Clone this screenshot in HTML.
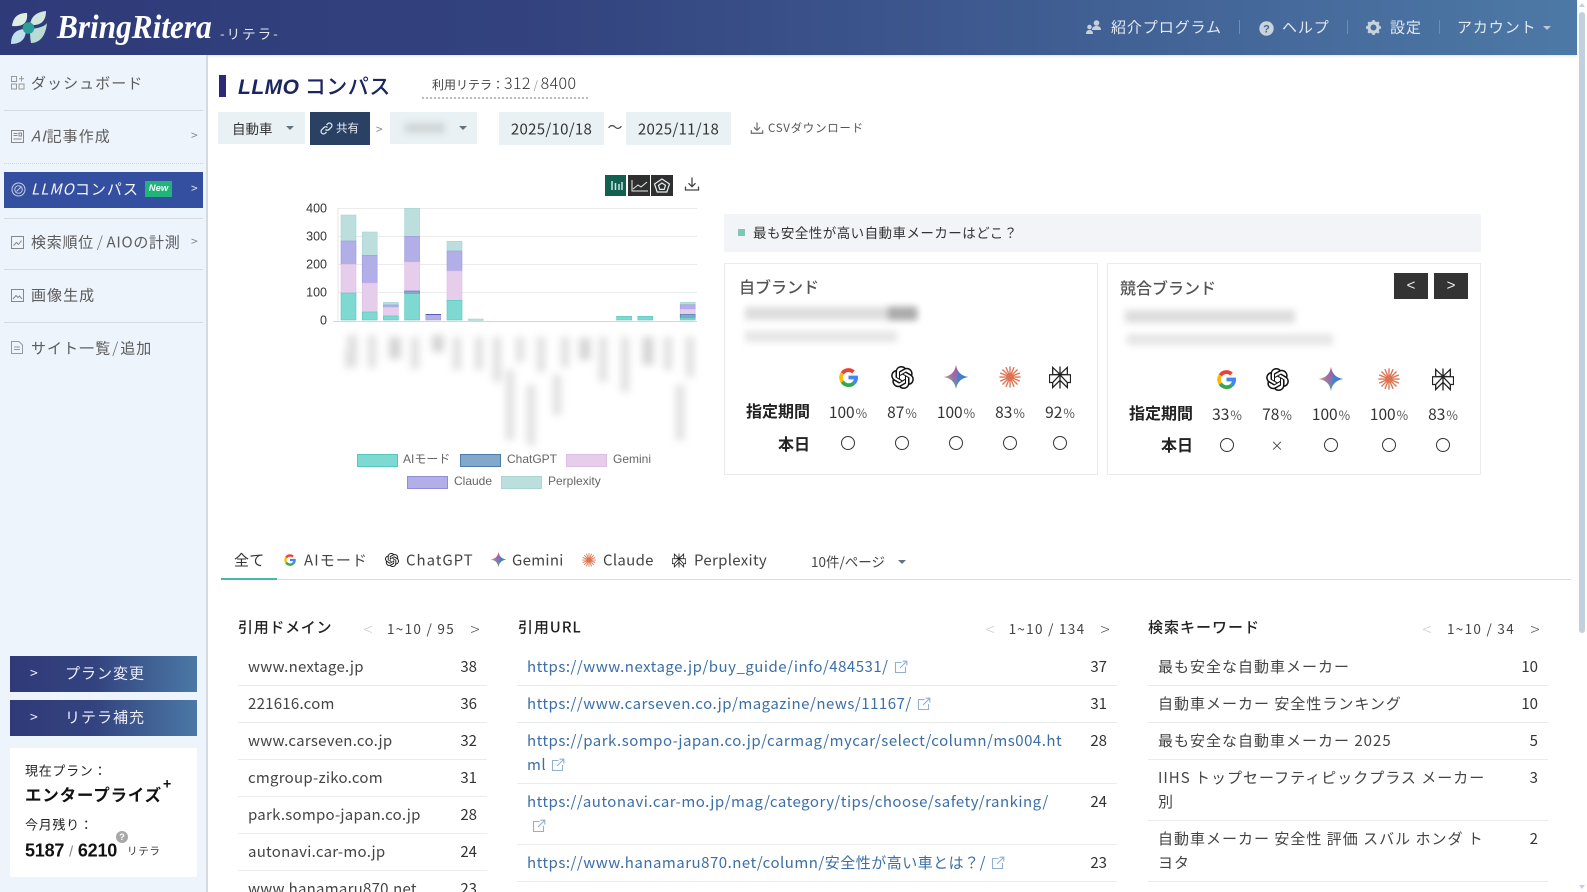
<!DOCTYPE html>
<html lang="ja"><head><meta charset="utf-8"><title>LLMOコンパス</title>
<style>
*{box-sizing:border-box}
html,body{margin:0;padding:0;width:1587px;height:892px;overflow:hidden;background:#fff}
body{position:relative;font-family:"Noto Sans CJK JP","Liberation Sans",sans-serif;color:#333;font-size:15px}
.a{position:absolute;white-space:nowrap}
.c{transform:translate(-50%,-50%)}
.v{transform:translateY(-50%)}
.r{transform:translate(-100%,-50%)}
#hd{left:0;top:0;width:1577px;height:55px;background:linear-gradient(90deg,#2f3a79 0%,#33437f 35%,#4d79a6 100%);box-shadow:0 1px 3px rgba(0,0,0,.12)}
.nav{color:#e3e9f0;font-size:15px;letter-spacing:.9px}
.sep{width:1px;height:14px;top:20px;background:#6d8fb3}
#sb{left:0;top:55px;width:208px;height:837px;background:#edf4fb;border-right:2px solid #d3dae2}
.mi{color:#5c5c5c;font-size:15px;letter-spacing:1.05px;font-weight:400}
.hr{left:4px;width:199px;height:1px;background:#d3dbe4}
.btn{left:10px;width:187px;height:36px;background:linear-gradient(90deg,#303a78 0%,#33437f 45%,#4b78a5 100%);color:#eef;font-size:15px;letter-spacing:1px}
.sel{background:#e9f1f5;height:32px;top:112px}
.car{width:0;height:0;border-left:4px solid transparent;border-right:4px solid transparent;border-top:4px solid #5f7380}
.card{background:#fff;border:1px solid #e9ebee}
.bold{font-weight:700;font-size:16px;color:#222}
.pc{font-size:15.5px;color:#333;font-weight:400}
.pc small{font-size:12.5px;color:#555;margin-left:1px}
.o{width:14px;height:14px;border:1px solid #333;border-radius:50%}
.tab{font-size:15px;color:#444;letter-spacing:.3px;font-weight:400}
.st{font-size:15px;font-weight:500;color:#222}
.pg{font-size:13.5px;color:#444;font-weight:400;letter-spacing:1.3px}
.lt{color:#ccc;font-size:17px;font-weight:300}
.gt{color:#555;font-size:17px;font-weight:300}
.col{top:649px}
.row{display:flex;justify-content:space-between;padding:6px 10px;line-height:24px;border-bottom:1px solid #e9ebed;font-size:15px;color:#444;font-weight:400;white-space:nowrap}
.row b{font-weight:400;color:#333;letter-spacing:0}
.d .row{letter-spacing:.25px}
.u .row{letter-spacing:.49px}
.k .row{letter-spacing:1px}
.u span{color:#3c6fa6}
.u svg{vertical-align:-2px;margin-left:5px}
.bl{background:#aaa;filter:blur(3.5px);opacity:.4}
.bd{background:#777;filter:blur(3.5px);opacity:.5}
</style></head><body>
<svg width="0" height="0" style="position:absolute"><defs>
<linearGradient id="gm" x1="0" y1="0" x2="0" y2="1"><stop offset="0" stop-color="#e0457b"/><stop offset=".5" stop-color="#9a6ab0"/><stop offset="1" stop-color="#45b27a"/></linearGradient>
<linearGradient id="gm2" x1="0" y1="0" x2="1" y2="0"><stop offset="0" stop-color="#e6b53a" stop-opacity=".9"/><stop offset=".45" stop-color="#8a7ab8" stop-opacity=".1"/><stop offset=".6" stop-color="#2a86d8" stop-opacity=".7"/><stop offset="1" stop-color="#2a86d8"/></linearGradient>
<symbol id="ig" viewBox="0 0 24 24"><path d="M5.600 7.600A7.800 7.800 0 0 1 12 4.200a7.800 7.800 0 0 1 5.200 2" fill="none" stroke="#ea4335" stroke-width="4"/><path d="M5.600 7.600a8 8 0 0 0 0 8.800" fill="none" stroke="#fbbc05" stroke-width="4"/><path d="M5.600 16.400A7.800 7.800 0 0 0 17.400 18" fill="none" stroke="#34a853" stroke-width="4"/><path d="M17.400 18a7.800 7.800 0 0 0 2.500-6H12" fill="none" stroke="#4285f4" stroke-width="4"/></symbol>
<symbol id="ic" viewBox="0 0 24 24"><path fill="#111" d="M22.2819 9.8211a5.9847 5.9847 0 0 0-.5157-4.9108 6.0462 6.0462 0 0 0-6.5098-2.9A6.0651 6.0651 0 0 0 4.9807 4.1818a5.9847 5.9847 0 0 0-3.9977 2.9 6.0462 6.0462 0 0 0 .7427 7.0966 5.98 5.98 0 0 0 .511 4.9107 6.051 6.051 0 0 0 6.5146 2.9001A5.9847 5.9847 0 0 0 13.2599 24a6.0557 6.0557 0 0 0 5.7718-4.2058 5.9894 5.9894 0 0 0 3.9977-2.9001 6.0557 6.0557 0 0 0-.7475-7.0729zm-9.022 12.6081a4.4755 4.4755 0 0 1-2.8764-1.0408l.1419-.0804 4.7783-2.7582a.7948.7948 0 0 0 .3927-.6813v-6.7369l2.02 1.1686a.071.071 0 0 1 .038.052v5.5826a4.504 4.504 0 0 1-4.4945 4.4944zm-9.6607-4.1254a4.4708 4.4708 0 0 1-.5346-3.0137l.142.0852 4.783 2.7582a.7712.7712 0 0 0 .7806 0l5.8428-3.3685v2.3324a.0804.0804 0 0 1-.0332.0615L9.74 19.9502a4.4992 4.4992 0 0 1-6.1408-1.6464zM2.3408 7.8956a4.485 4.485 0 0 1 2.3655-1.9728V11.6a.7664.7664 0 0 0 .3879.6765l5.8144 3.3543-2.0201 1.1685a.0757.0757 0 0 1-.071 0l-4.8303-2.7865A4.504 4.504 0 0 1 2.3408 7.872zm16.5963 3.8558L13.1038 8.364 15.1192 7.2a.0757.0757 0 0 1 .071 0l4.8303 2.7913a4.4944 4.4944 0 0 1-.6765 8.1042v-5.6772a.79.79 0 0 0-.407-.667zm2.0107-3.0231l-.142-.0852-4.7735-2.7818a.7759.7759 0 0 0-.7854 0L9.409 9.2297V6.8974a.0662.0662 0 0 1 .0284-.0615l4.8303-2.7866a4.4992 4.4992 0 0 1 6.6802 4.66zM8.3065 12.863l-2.02-1.1638a.0804.0804 0 0 1-.038-.0567V6.0742a4.4992 4.4992 0 0 1 7.3757-3.4537l-.142.0805L8.704 5.459a.7948.7948 0 0 0-.3927.6813zm1.0976-2.3654l2.602-1.4998 2.6069 1.4998v2.9994l-2.5974 1.4997-2.6067-1.4997Z"/></symbol>
<symbol id="im" viewBox="0 0 24 24"><path fill="url(#gm)" d="M12 0c1.200 6.800 4.600 10.600 12 12-7.400 1.400-10.800 5.200-12 12-1.200-6.800-4.600-10.600-12-12C7.400 10.600 10.800 6.800 12 0z"/><path fill="url(#gm2)" d="M12 0c1.200 6.800 4.600 10.600 12 12-7.400 1.400-10.800 5.200-12 12-1.200-6.800-4.600-10.600-12-12C7.400 10.600 10.800 6.800 12 0z"/></symbol>
<symbol id="il" viewBox="0 0 24 24"><g stroke="#dd7350" stroke-width="1.500" stroke-linecap="round"><path d="M12 1v22M1 12h22M4.200 4.200l15.600 15.600M19.800 4.200L4.200 19.800M7.800 1.800l8.400 20.400M16.200 1.800L7.800 22.200M1.800 7.800l20.400 8.400M22.200 7.800L1.800 16.200"/></g><circle cx="12" cy="12" r="2.600" fill="#dd7350"/></symbol>
<symbol id="ip" viewBox="0 0 24 24"><path fill="none" stroke="#222" stroke-width="1.400" d="M12 0v24M4 1l8 7.500L20 1v8h3.500v8.500H20V23l-8-8-8 8v-5.500H.5V9H4zM4 9h16M4 9l8-.5M20 9l-8-.5M4 17.500L12 9l8 8.500"/></symbol>
<symbol id="ix" viewBox="0 0 14 14"><path fill="none" stroke="#8fb0cf" stroke-width="1.100" d="M7.500 2.500H1.500v10h10V7M6 8l6.500-6.500M8.500 1.200h4.300v4.300"/></symbol>
<symbol id="dl" viewBox="0 0 16 16"><path fill="none" stroke="currentColor" stroke-width="1.300" d="M8 1.500v9M4.500 7.200L8 10.700l3.500-3.500M1.500 10.500v3.500h13v-3.500"/></symbol>
</defs></svg>

<div class="a" id="hd"></div>
<svg class="a" style="left:10px;top:10px" width="38" height="36" viewBox="0 0 38 36">
<path d="M2 16C3 8 7 3 17 3c1 9-3 14-15 13z" fill="#dfeee3"/><path d="M20 15C21 6 27 2 36 1c0 9-4 15-16 14z" fill="#d2e6de"/>
<path d="M1 34c0-10 5-15 15-15 0 9-4 15-15 15z" fill="#c0e0ec"/><path d="M20 19c10-1 15-3 17-6-1 11-6 20-16 20-1-5-1-10-1-14z" fill="#b9dbd5"/>
<circle cx="18.500" cy="18" r="5.800" fill="#2a9f97"/></svg>
<div class="a" style="left:57px;top:11px;color:#fff;font:italic 700 34px/34px 'Liberation Serif',serif;transform-origin:0 0;transform:scaleX(.92)">BringRitera</div>
<div class="a v" style="left:220px;top:33px;color:#e3e9f0;font-size:13.500px;letter-spacing:2px">-リテラ-</div>

<svg class="a" style="left:1085px;top:20px" width="17" height="15" viewBox="0 0 17 15" fill="#c5d0dc"><circle cx="11.500" cy="3" r="2.800"/><path d="M7 10c0-3 2-4 4.500-4S16 7 16 10z"/><circle cx="4.500" cy="7" r="2.300"/><path d="M1 14c0-3 1.500-4 3.500-4S8 11 8 14z"/></svg>
<div class="a v nav" style="left:1111px;top:27px">紹介プログラム</div><div class="a sep" style="left:1239px"></div>
<svg class="a" style="left:1259px;top:21px" width="15" height="15" viewBox="0 0 15 15"><circle cx="7.500" cy="7.500" r="7.200" fill="#c9d3de"/><text x="7.500" y="11.500" text-anchor="middle" font-size="11" font-weight="700" fill="#42688f" font-family="Liberation Sans">?</text></svg>
<div class="a v nav" style="left:1282px;top:27px">ヘルプ</div><div class="a sep" style="left:1347px"></div>
<svg class="a" style="left:1366px;top:20px" width="15" height="15" viewBox="0 0 15 15"><circle cx="7.500" cy="7.500" r="4.600" fill="none" stroke="#c9d3de" stroke-width="3.200"/><g stroke="#c9d3de" stroke-width="2.400"><path d="M7.500 0v3M7.500 12v3M0 7.500h3M12 7.500h3M2.200 2.200l2 2M10.800 10.800l2 2M12.800 2.200l-2 2M4.200 10.800l-2 2"/></g></svg>
<div class="a v nav" style="left:1390px;top:27px">設定</div><div class="a sep" style="left:1439px"></div>
<div class="a v nav" style="left:1457px;top:27px">アカウント</div>
<div class="a car" style="left:1543px;top:26px;border-top-color:#b9c8d8"></div>

<!-- scrollbar -->
<div class="a" style="left:1579px;top:12px;width:6px;height:621px;background:#c2cfdc;border-radius:3px"></div>
<div class="a car" style="left:1579px;top:3px;border-top:0;border-bottom:4px solid #c2cfdc;border-left-width:3px;border-right-width:3px"></div>
<div class="a car" style="left:1579px;top:885px;border-top-color:#c2cfdc;border-left-width:3px;border-right-width:3px"></div>

<!-- sidebar -->
<div class="a" id="sb"></div>
<svg class="a" style="left:11px;top:75px" width="14" height="15" viewBox="0 0 14 15" fill="none" stroke="#999"><path d="M.5 1.500h5v5h-5zM.5 9h5v5h-5zM8 9h5v5H8zM10.500 1v5.500M8 3.700h5"/></svg>
<div class="a v mi" style="left:31px;top:83px">ダッシュボード</div><div class="a hr" style="top:110px"></div>
<svg class="a" style="left:11px;top:130px" width="13" height="13" viewBox="0 0 13 13" fill="none" stroke="#888"><path d="M.5.500h12v12H.5zM2.500 3.500h4M2.500 5.500h4M8 3h2.500v3H8zM2.500 9h8"/></svg>
<div class="a v mi" style="left:31px;top:136px"><i>AI</i>記事作成</div><div class="a v" style="left:191px;top:135px;color:#888;font-size:12px">&gt;</div>
<div class="a hr" style="top:163px;background:none;border-top:1px dotted #ccd4dd"></div>
<div class="a" style="left:4px;top:172px;width:199px;height:36px;background:#354fa0"></div>
<svg class="a" style="left:11px;top:182px" width="15" height="15" viewBox="0 0 15 15" fill="none" stroke="#c4cfe8"><circle cx="7.500" cy="7.500" r="6.500"/><circle cx="7.500" cy="7.500" r="3.800"/><path d="M5.500 9.500L10 5"/></svg>
<div class="a v mi" style="left:31px;top:189px;color:#f5f7fc"><i>LLMO</i>コンパス</div>
<div class="a" style="left:145px;top:181px;width:27px;height:16px;background:#20b47a;color:#e9fff4;font:italic 700 9.500px/16px 'Liberation Sans',sans-serif;text-align:center">New</div>
<div class="a v" style="left:191px;top:188px;color:#dfe6f5;font-size:12px">&gt;</div>
<div class="a hr" style="top:218px"></div>
<svg class="a" style="left:11px;top:236px" width="13" height="13" viewBox="0 0 13 13" fill="none" stroke="#888"><path d="M.5.500h12v12H.5zM2.500 9.500l3-3 2 2 3-4"/></svg>
<div class="a v mi" style="left:31px;top:242px;letter-spacing:.72px">検索順位<span style="font-weight:300;margin:0 3px">/</span>AIOの計測</div><div class="a v" style="left:191px;top:241px;color:#888;font-size:12px">&gt;</div>
<div class="a hr" style="top:269px"></div>
<svg class="a" style="left:11px;top:289px" width="13" height="13" viewBox="0 0 13 13" fill="none" stroke="#888"><path d="M.5.500h12v12H.5zM2 10l3-3.500 2 2 1.500-1.500 2.500 3"/></svg>
<div class="a v mi" style="left:31px;top:295px">画像生成</div><div class="a hr" style="top:322px"></div>
<svg class="a" style="left:11px;top:341px" width="12" height="13" viewBox="0 0 12 13" fill="none" stroke="#999"><path d="M.5.500h7.500l3.500 3.500v8.500H.5zM3 6h6M3 8.500h6"/></svg>
<div class="a v mi" style="left:31px;top:348px">サイト一覧<span style="font-weight:300;margin:0 1px">/</span>追加</div>

<div class="a btn" style="top:656px"></div><div class="a v" style="left:30px;top:673px;color:#eef;font-size:14px">&gt;</div><div class="a v" style="left:65px;top:673px;color:#eef;letter-spacing:1px;font-size:15px">プラン変更</div>
<div class="a btn" style="top:700px"></div><div class="a v" style="left:30px;top:717px;color:#eef;font-size:14px">&gt;</div><div class="a v" style="left:65px;top:717px;color:#eef;letter-spacing:1px;font-size:15px">リテラ補充</div>
<div class="a" style="left:10px;top:748px;width:187px;height:129px;background:#fff"></div>
<div class="a v" style="left:25px;top:770px;font-size:13px;color:#222;letter-spacing:.7px;font-weight:400">現在プラン：</div>
<div class="a v" style="left:25px;top:794px;font-size:16.500px;font-weight:700;color:#111;letter-spacing:.8px">エンタープライズ</div>
<div class="a v" style="left:163px;top:784px;font-size:14px;font-weight:700;color:#111">+</div>
<div class="a v" style="left:25px;top:824px;font-size:13px;color:#222;letter-spacing:.7px;font-weight:400">今月残り：</div>
<div class="a v" style="left:25px;top:851px;font:700 18px 'Liberation Sans',sans-serif;color:#111;letter-spacing:-.2px">5187 <span style="font-weight:400;color:#888;font-size:15px">/</span> 6210</div>
<div class="a" style="left:116px;top:831px;width:12px;height:12px;border-radius:50%;background:#a8a8a8;color:#fff;font:700 9px/12px 'Liberation Sans';text-align:center">?</div>
<div class="a v" style="left:127px;top:851px;font-size:10.500px;color:#333;letter-spacing:.7px">リテラ</div>

<!-- title -->
<div class="a" style="left:219px;top:75px;width:7px;height:22px;background:#2a2b74"></div>
<div class="a v" style="left:238px;top:86px;font-size:21px;font-weight:500;color:#1b2660;letter-spacing:.5px"><i style="font-family:'Liberation Sans'; font-weight:700">LLMO</i> コンパス</div>
<div class="a v" style="left:432px;top:81.500px;font-size:12px;color:#444;letter-spacing:0;font-weight:400">利用リテラ：<span style="font-size:16px;color:#333;letter-spacing:.4px;font-weight:300">312</span> <span style="color:#999;font-size:11px">/</span> <span style="font-size:16px;color:#333;letter-spacing:.4px;font-weight:300">8400</span></div>
<div class="a" style="left:422px;top:97px;width:166px;border-top:2px dotted #bbb"></div>

<div class="a sel" style="left:218px;width:87px"></div><div class="a v" style="left:232px;top:128px;font-size:13.500px;color:#333">自動車</div><div class="a car" style="left:286px;top:126px"></div>
<div class="a" style="left:310px;top:112px;width:60px;height:33px;background:#2a4163"></div>
<svg class="a" style="left:320px;top:122px" width="13" height="13" viewBox="0 0 13 13" fill="none" stroke="#dfe6ee" stroke-width="1.300"><path d="M5.500 7.500a2.400 2.400 0 0 0 3.500 0l2.200-2.200a2.400 2.400 0 0 0-3.500-3.500L6.500 3M7.500 5.500a2.400 2.400 0 0 0-3.500 0L1.800 7.700a2.400 2.400 0 0 0 3.500 3.500L6.500 10"/></svg>
<div class="a v" style="left:336px;top:128px;font-size:11.500px;color:#e6ebf2">共有</div>
<div class="a v" style="left:376px;top:129px;font-size:12px;color:#888">&gt;</div>
<div class="a sel" style="left:390px;width:87px"></div><div class="a bl" style="left:405px;top:123px;width:40px;height:10px"></div><div class="a car" style="left:459px;top:126px"></div>
<div class="a sel" style="left:499px;width:105px;height:33px"></div><div class="a c" style="left:551.500px;top:129px;font-size:15px;color:#333;font-weight:400;letter-spacing:.3px">2025/10/18</div>
<div class="a c" style="left:615px;top:127px;font-size:15px;color:#444">〜</div>
<div class="a sel" style="left:626px;width:105px;height:33px"></div><div class="a c" style="left:678.500px;top:129px;font-size:15px;color:#333;font-weight:400;letter-spacing:.3px">2025/11/18</div>
<svg class="a" style="left:750px;top:121px;color:#666" width="14" height="14"><use href="#dl"/></svg>
<div class="a v" style="left:768px;top:128px;font-size:11.500px;color:#555;font-weight:400;letter-spacing:.7px">CSVダウンロード</div>

<!-- chart toolbar -->
<div class="a" style="left:605px;top:175px;width:21px;height:21px;background:#116150"></div>
<div class="a" style="left:628px;top:175px;width:22px;height:21px;background:#2f2f2f"></div>
<div class="a" style="left:651px;top:175px;width:22px;height:21px;background:#2f2f2f"></div>
<svg class="a" style="left:605px;top:175px" width="68" height="21" fill="none" stroke="#e6eeee"><path stroke-width="1.500" d="M7 6v9M10.500 8v7M14 9v6M17 7v8" stroke="#cfe6df"/><path d="M27 5v11h16M28 14l5-4 3 2 6-5"/><path d="M57 4l7.500 5-2.700 8h-9.600l-2.700-8z M57 8l3.500 2.400-1.300 4h-4.400l-1.300-4z" stroke-width="1.200"/></svg>
<svg class="a" style="left:684px;top:176px;color:#444" width="16" height="16"><use href="#dl"/></svg>

<!-- chart -->
<svg class="a" style="left:0;top:0" width="1587" height="892">
<defs><filter id="f" x="-10%" y="-10%" width="120%" height="120%"><feGaussianBlur stdDeviation="4"/></filter></defs>
<g stroke="#ebebeb"><path d="M338 208.500H697M338 236.500H697M338 264.500H697M338 292.500H697"/></g><path d="M338 208v113" stroke="#e6e6e6"/><path d="M333 321.500H697" stroke="#d5d5d5"/>
<g font-family="Liberation Sans" font-size="12.500" fill="#333" text-anchor="end"><text x="327" y="212.500">400</text><text x="327" y="240.500">300</text><text x="327" y="268.500">200</text><text x="327" y="296.500">100</text><text x="327" y="324.500">0</text></g>
<g fill="#bcdfdd" stroke="#a9d5d2" stroke-width=".6"><rect x="341" y="215" width="15" height="26"/><rect x="362.200" y="232" width="15" height="23.300"/><rect x="383.400" y="302.300" width="15" height="2.700"/><rect x="404.600" y="208.300" width="15" height="28"/><rect x="447" y="241.300" width="15" height="9.700"/><rect x="468.200" y="319" width="15" height="1.500"/><rect x="680.200" y="302.300" width="15" height="2.400"/></g>
<g fill="#b2aee8" stroke="#a09bdf" stroke-width=".6"><rect x="341" y="241" width="15" height="23.300"/><rect x="362.200" y="255.300" width="15" height="27.700"/><rect x="383.400" y="305" width="15" height="2.300"/><rect x="404.600" y="236.300" width="15" height="25.700"/><rect x="425.800" y="314.300" width="15" height="5.700"/><rect x="447" y="251" width="15" height="20"/><rect x="680.200" y="304.700" width="15" height="4.600"/></g>
<g fill="#e6cdec" stroke="#ddbfe6" stroke-width=".6"><rect x="341" y="264.300" width="15" height="28.700"/><rect x="362.200" y="283" width="15" height="29"/><rect x="383.400" y="307.300" width="15" height="8.700"/><rect x="404.600" y="262" width="15" height="29"/><rect x="447" y="271" width="15" height="29.300"/><rect x="680.200" y="309.300" width="15" height="5"/></g>
<g fill="#82a9cc" stroke="#4d7cab" stroke-width=".6"><rect x="404.600" y="291" width="15" height="2.700"/><rect x="680.200" y="314.300" width="15" height="3.700"/></g>
<path d="M425.800 314.500h15" stroke="#5a57b0" stroke-width="1"/>
<g fill="#7dd9d2" stroke="#55c8be" stroke-width=".6"><rect x="341" y="293" width="15" height="27"/><rect x="362.200" y="312" width="15" height="8"/><rect x="383.400" y="316" width="15" height="4"/><rect x="404.600" y="293.700" width="15" height="26.300"/><rect x="447" y="300.300" width="15" height="19.700"/><rect x="616.600" y="316.300" width="15" height="3.700"/><rect x="637.800" y="316.300" width="15" height="3.700"/><rect x="680.200" y="318" width="15" height="2"/></g>
<g filter="url(#f)" stroke="#8a8a8a" stroke-width="8" opacity=".28" fill="none">
<path d="M352 335v30M350 350v18" stroke-width="10"/><path d="M372 335v33"/><path d="M395 337v22" stroke-width="12" stroke="#666"/><path d="M415 337v32"/><path d="M438 335v17" stroke-width="12" stroke="#666"/><path d="M457 337v33"/><path d="M479 337v33"/><path d="M497 337v45"/><path d="M520 337v25M510 370v70"/><path d="M541 337v35M531 385v60"/><path d="M565 337v30M557 375v40"/><path d="M585 338v22" stroke-width="11" stroke="#666"/><path d="M603 337v45"/><path d="M625 337v55"/><path d="M648 337v28" stroke-width="11" stroke="#666"/><path d="M668 337v33"/><path d="M690 337v40M680 385v55"/>
</g>
<g stroke-width="1"><rect x="357.500" y="454.500" width="40" height="12" fill="#7dd9d2" stroke="#55c8be"/><rect x="460.500" y="454.500" width="40" height="12" fill="#82a9cc" stroke="#4d7cab"/><rect x="566.500" y="454.500" width="40" height="12" fill="#e6cdec" stroke="#ddbfe6"/><rect x="407.500" y="476.500" width="40" height="12" fill="#b2aee8" stroke="#918cd9"/><rect x="501.500" y="476.500" width="40" height="12" fill="#bcdfdd" stroke="#a9d5d2"/></g>
<g font-family="Liberation Sans, Noto Sans CJK JP" font-size="12" fill="#666"><text x="403" y="463">AIモード</text><text x="507" y="463">ChatGPT</text><text x="613" y="463">Gemini</text><text x="454" y="485">Claude</text><text x="548" y="485">Perplexity</text></g>
</svg>

<!-- question -->
<div class="a" style="left:724px;top:214px;width:757px;height:38px;background:#f3f4f8"></div>
<div class="a" style="left:738px;top:229px;width:7px;height:7px;background:#7fc7b4"></div>
<div class="a v" style="left:753px;top:232px;font-size:13.500px;color:#333;letter-spacing:.45px;font-weight:400">最も安全性が高い自動車メーカーはどこ？</div>

<!-- cards -->
<div class="a card" style="left:724px;top:263px;width:374px;height:212px"></div>
<div class="a card" style="left:1107px;top:263px;width:374px;height:212px"></div>
<div class="a v" style="left:739px;top:286px;font-size:16px;font-weight:500;color:#555">自ブランド</div>
<div class="a bl" style="left:745px;top:307px;width:172px;height:13px"></div><div class="a bd" style="left:888px;top:307px;width:29px;height:13px"></div><div class="a bl" style="left:745px;top:331px;width:152px;height:11px;opacity:.3"></div>
<svg class="a" style="left:837px;top:366px" width="23" height="23"><use href="#ig"/></svg><svg class="a" style="left:891px;top:366px" width="23" height="23"><use href="#ic"/></svg><svg class="a" style="left:944px;top:365px" width="24" height="24"><use href="#im"/></svg><svg class="a" style="left:999px;top:366px" width="22" height="22"><use href="#il"/></svg><svg class="a" style="left:1049px;top:366px" width="22" height="23"><use href="#ip"/></svg>
<div class="a bold r" style="left:810px;top:410px">指定期間</div>
<div class="a pc c" style="left:848px;top:412px">100<small>%</small></div><div class="a pc c" style="left:902px;top:412px">87<small>%</small></div><div class="a pc c" style="left:956px;top:412px">100<small>%</small></div><div class="a pc c" style="left:1010px;top:412px">83<small>%</small></div><div class="a pc c" style="left:1060px;top:412px">92<small>%</small></div>
<div class="a bold r" style="left:810px;top:443px">本日</div>
<div class="a o" style="left:841px;top:436px"></div><div class="a o" style="left:895px;top:436px"></div><div class="a o" style="left:949px;top:436px"></div><div class="a o" style="left:1003px;top:436px"></div><div class="a o" style="left:1053px;top:436px"></div>

<div class="a v" style="left:1120px;top:287px;font-size:16px;font-weight:500;color:#555">競合ブランド</div>
<div class="a" style="left:1394px;top:273px;width:34px;height:26px;background:#333;color:#eee;text-align:center;font:15px/25px 'Liberation Sans'">&lt;</div>
<div class="a" style="left:1434px;top:273px;width:34px;height:26px;background:#333;color:#eee;text-align:center;font:15px/25px 'Liberation Sans'">&gt;</div>
<div class="a bl" style="left:1125px;top:310px;width:170px;height:13px"></div><div class="a bl" style="left:1127px;top:334px;width:206px;height:11px;opacity:.3"></div>
<svg class="a" style="left:1215px;top:368px" width="23" height="23"><use href="#ig"/></svg><svg class="a" style="left:1266px;top:368px" width="23" height="23"><use href="#ic"/></svg><svg class="a" style="left:1319px;top:367px" width="24" height="24"><use href="#im"/></svg><svg class="a" style="left:1378px;top:368px" width="22" height="22"><use href="#il"/></svg><svg class="a" style="left:1432px;top:368px" width="22" height="23"><use href="#ip"/></svg>
<div class="a bold r" style="left:1193px;top:412px">指定期間</div>
<div class="a pc c" style="left:1227px;top:414px">33<small>%</small></div><div class="a pc c" style="left:1277px;top:414px">78<small>%</small></div><div class="a pc c" style="left:1331px;top:414px">100<small>%</small></div><div class="a pc c" style="left:1389px;top:414px">100<small>%</small></div><div class="a pc c" style="left:1443px;top:414px">83<small>%</small></div>
<div class="a bold r" style="left:1193px;top:444px">本日</div>
<div class="a o" style="left:1220px;top:438px"></div><div class="a c" style="left:1277px;top:445px;font-size:13px;color:#444">×</div><div class="a o" style="left:1324px;top:438px"></div><div class="a o" style="left:1382px;top:438px"></div><div class="a o" style="left:1436px;top:438px"></div>

<!-- tabs -->
<div class="a tab v" style="left:234px;top:560px;color:#333">全て</div>
<svg class="a" style="left:283px;top:553px" width="14" height="14"><use href="#ig"/></svg><div class="a tab v" style="left:304px;top:560px;letter-spacing:1.100px">AIモード</div>
<svg class="a" style="left:385px;top:553px" width="14" height="14"><use href="#ic"/></svg><div class="a tab v" style="left:406px;top:560px;letter-spacing:.95px">ChatGPT</div>
<svg class="a" style="left:491px;top:552px" width="15" height="15"><use href="#im"/></svg><div class="a tab v" style="left:512px;top:560px">Gemini</div>
<svg class="a" style="left:582px;top:553px" width="14" height="14"><use href="#il"/></svg><div class="a tab v" style="left:603px;top:560px">Claude</div>
<svg class="a" style="left:672px;top:553px" width="14" height="15"><use href="#ip"/></svg><div class="a tab v" style="left:694px;top:560px">Perplexity</div>
<div class="a v" style="left:811px;top:561px;font-size:13.500px;color:#444;font-weight:400">10件/ページ</div><div class="a car" style="left:898px;top:560px"></div>
<div class="a" style="left:221px;top:579px;width:1350px;height:1px;background:#d9d9d9"></div>
<div class="a" style="left:221px;top:578px;width:56px;height:2px;background:#45b8ac"></div>

<!-- lists -->
<div class="a st v" style="left:238px;top:627px;letter-spacing:.7px">引用ドメイン</div>
<div class="a c lt" style="left:368px;top:628px">&lt;</div><div class="a pg c" style="left:421px;top:628px">1~10 / 95</div><div class="a c gt" style="left:475px;top:628px">&gt;</div>
<div class="a col d" style="left:238px;width:249px;height:243px;overflow:hidden">
<div class="row"><span>www.nextage.jp</span><b>38</b></div><div class="row"><span>221616.com</span><b>36</b></div><div class="row"><span>www.carseven.co.jp</span><b>32</b></div><div class="row"><span>cmgroup-ziko.com</span><b>31</b></div><div class="row"><span>park.sompo-japan.co.jp</span><b>28</b></div><div class="row"><span>autonavi.car-mo.jp</span><b>24</b></div><div class="row"><span>www.hanamaru870.net</span><b>23</b></div></div>

<div class="a st v" style="left:518px;top:627px;letter-spacing:.9px">引用URL</div>
<div class="a c lt" style="left:990px;top:628px">&lt;</div><div class="a pg c" style="left:1047px;top:628px">1~10 / 134</div><div class="a c gt" style="left:1105px;top:628px">&gt;</div>
<div class="a col u" style="left:517px;width:600px">
<div class="row"><span>https://www.nextage.jp/buy_guide/info/484531/<svg width="14" height="14"><use href="#ix"/></svg></span><b>37</b></div>
<div class="row"><span>https://www.carseven.co.jp/magazine/news/11167/<svg width="14" height="14"><use href="#ix"/></svg></span><b>31</b></div>
<div class="row"><span>https://park.sompo-japan.co.jp/carmag/mycar/select/column/ms004.ht<br>ml<svg width="14" height="14"><use href="#ix"/></svg></span><b>28</b></div>
<div class="row"><span>https://autonavi.car-mo.jp/mag/category/tips/choose/safety/ranking/<br><svg width="14" height="14"><use href="#ix"/></svg></span><b>24</b></div>
<div class="row"><span>https://www.hanamaru870.net/column/安全性が高い車とは？/<svg width="14" height="14"><use href="#ix"/></svg></span><b>23</b></div></div>

<div class="a st v" style="left:1148px;top:627px;letter-spacing:1px">検索キーワード</div>
<div class="a c lt" style="left:1427px;top:628px">&lt;</div><div class="a pg c" style="left:1481px;top:628px">1~10 / 34</div><div class="a c gt" style="left:1535px;top:628px">&gt;</div>
<div class="a col k" style="left:1148px;width:400px">
<div class="row"><span>最も安全な自動車メーカー</span><b>10</b></div>
<div class="row"><span>自動車メーカー 安全性ランキング</span><b>10</b></div>
<div class="row"><span>最も安全な自動車メーカー 2025</span><b>5</b></div>
<div class="row"><span>IIHS トップセーフティピックプラス メーカー<br>別</span><b>3</b></div>
<div class="row"><span>自動車メーカー 安全性 評価 スバル ホンダ ト<br>ヨタ</span><b>2</b></div></div>
</body></html>
